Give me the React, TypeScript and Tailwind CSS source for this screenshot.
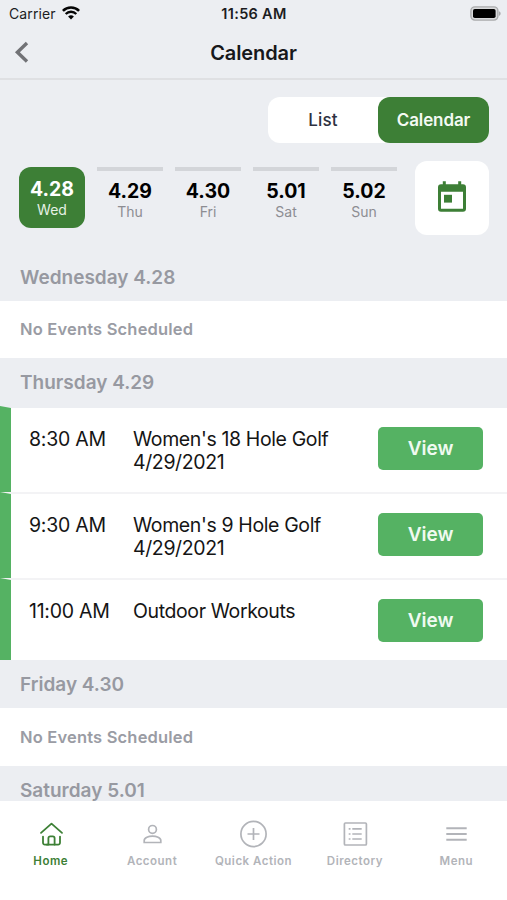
import { ReactNode } from "react";

const DAYS = [
  { date: "4.28", day: "Wed" },
  { date: "4.29", day: "Thu" },
  { date: "4.30", day: "Fri" },
  { date: "5.01", day: "Sat" },
  { date: "5.02", day: "Sun" },
];

const EVENTS = [
  { time: "8:30 AM", title: "Women's 18 Hole Golf", date: "4/29/2021" },
  { time: "9:30 AM", title: "Women's 9 Hole Golf", date: "4/29/2021" },
  { time: "11:00 AM", title: "Outdoor Workouts", date: "" },
];

function StatusBar() {
  return (
    <div className="h-7 grid grid-cols-3 items-center pl-[9px] pr-[6px] text-sm text-[#1c1d1f]">
      <div className="flex items-center gap-[6px]">
        <span className="text-[14px] tracking-[0.12px]">Carrier</span>
        <svg className="-mt-[2px]" width="18" height="14" viewBox="0 0 18 14" fill="none" stroke="#050505">
          <path d="M.9 4.9a11.4 11.4 0 0 1 16.2 0" strokeWidth="2.6" />
          <path d="M3.7 8a7.4 7.4 0 0 1 10.6 0" strokeWidth="2.3" />
          <path d="M9 13.6 6.1 10.6a4.2 4.2 0 0 1 5.8 0Z" fill="#050505" stroke="none" />
        </svg>
      </div>
      <span className="-ml-[2px] text-center text-[14.5px] font-semibold tracking-[0.3px] whitespace-nowrap">
        11:56 AM
      </span>
      <svg className="justify-self-end -mt-[2px]" width="31" height="15" viewBox="0 0 31 15">
        <rect x="0.9" y="0.9" width="27" height="13.2" rx="4" fill="#d9dadc" stroke="#a9aaac" strokeWidth="1.4" />
        <rect x="3" y="3" width="22.6" height="9" rx="1.8" fill="#000" />
        <path d="M29 5.2c2.2.8 2.2 3.8 0 4.6Z" fill="#a9aaac" />
      </svg>
    </div>
  );
}

function Header() {
  return (
    <header className="h-[52px] pb-px grid grid-cols-3 items-center border-b-2 border-[#dfe0e3]">
      <svg className="-mt-px ml-[14px]" width="16" height="24" viewBox="0 0 16 24" fill="none" stroke="#717276" strokeWidth="3.4">
        <path d="M13 3 3.4 12.2 13 21.4" />
      </svg>
      <h1 className="text-center text-[20px] font-semibold tracking-[-0.1px] text-[#17181a]">
        Calendar
      </h1>
    </header>
  );
}

function SectionTitle({ children, className }: { children: ReactNode; className: string }) {
  return (
    <h2 className={`pl-5 flex items-center text-[19px] font-semibold text-[#9799a1] ${className}`}>
      {children}
    </h2>
  );
}

function NoEvents({ className }: { className: string }) {
  return (
    <p className={`pl-5 flex items-center bg-white text-[16.5px] font-semibold tracking-[0.18px] text-[#9a9ca4] ${className}`}>
      No Events Scheduled
    </p>
  );
}

function Tab({ label, active, children }: { label: string; active?: boolean; children: ReactNode }) {
  return (
    <div className={`flex flex-col items-center ${active ? "text-[#3d8036]" : "text-[#b2b4b9]"}`}>
      <svg width="30" height="30" viewBox="0 0 30 30" fill="none" stroke="currentColor" strokeWidth="1.7">
        {children}
      </svg>
      <span className="mt-[5px] text-[11.5px] leading-[15px] font-semibold tracking-[0.5px] whitespace-nowrap">
        {label}
      </span>
    </div>
  );
}

export default function App() {
  return (
    <div className="w-[507px] h-[900px] overflow-hidden flex flex-col bg-[#eceef2] font-['Inter',sans-serif]">
      <StatusBar />
      <Header />

      {/* View toggle */}
      <div className="mt-[17px] mr-[18px] self-end flex shrink-0 w-[221px] h-[46px] rounded-xl bg-white text-[17px] font-semibold">
        <button className="w-[110px] pt-[2px] text-[#2d3140] font-medium tracking-[0.2px]">List</button>
        <button className="w-[111px] pt-[2px] rounded-xl bg-[#3d7f36] text-[#f4faf3] tracking-[-0.1px]">Calendar</button>
      </div>

      {/* Day picker */}
      <div className="mt-[18px] pl-[19px] pr-[18px] h-[74px] shrink-0 flex justify-between">
        <div className="mt-[6px] flex gap-[12px]">
          {DAYS.map((d, i) => (
            <div
              key={d.date}
              className={`w-[66px] h-[61px] flex flex-col items-center ${
                i === 0
                  ? "rounded-xl bg-[#3d7f36] text-white pt-[10px]"
                  : "border-t-4 border-[#d3d5d9] text-black pt-[8px]"
              }`}
            >
              <span className="pt-px text-[19.5px] leading-[23px] font-bold">{d.date}</span>
              <span className={`text-[14px] leading-[18px] ${i === 0 ? "text-[#e6f1e5]" : "text-[#8c8d92]"}`}>
                {d.day}
              </span>
            </div>
          ))}
        </div>
        <button className="w-[74px] h-[74px] rounded-xl bg-white flex items-center justify-center">
          <svg className="-mt-[3px]" width="28" height="31" viewBox="0 0 28 31" fill="#3d7f36">
            <path
              fillRule="evenodd"
              d="M4.8.3h3v3h12.4v-3h3v3H25a3 3 0 0 1 3 3v21.4a3 3 0 0 1-3 3H3a3 3 0 0 1-3-3V6.3a3 3 0 0 1 3-3h1.8ZM3 10.800v16.900h22V10.800Z"
            />
            <rect x="6" y="13.8" width="8" height="7.8" />
          </svg>
        </button>
      </div>

      {/* Agenda */}
      <div className="flex-1 min-h-0 overflow-hidden">
        <SectionTitle className="h-[66px] pt-[20px]">Wednesday 4.28</SectionTitle>
        <NoEvents className="h-[57px]" />
        <SectionTitle className="h-[48px] pt-[2px]">Thursday 4.29</SectionTitle>
        {EVENTS.map((e, i) => (
          <div
            key={e.time}
            className={`flex border-l-[11px] border-l-[#55b263] border-t-2 bg-white pl-[18px] pt-[19px] text-[19.5px] leading-[23px] text-[#151515] ${
              i === 0 ? "border-t-[#eceef2]" : "border-t-[#f3f3f5]"
            } ${i === 2 ? "h-[82px]" : "h-[86px]"}`}
          >
            <span className="w-[104px] pt-px shrink-0 tracking-[-0.25px] whitespace-nowrap">{e.time}</span>
            <div className="flex-1 pt-px tracking-[-0.38px] whitespace-nowrap">
              <p>{e.title}</p>
              <p>{e.date}</p>
            </div>
            <button className="mr-[24px] w-[105px] h-[43px] rounded-[5px] bg-[#55b263] text-[19px] font-semibold text-[#f0faf1]">
              View
            </button>
          </div>
        ))}
        <SectionTitle className="h-[48px] pt-[2px]">Friday 4.30</SectionTitle>
        <NoEvents className="h-[58px]" />
        <SectionTitle className="h-[48px] pt-[2px]">Saturday 5.01</SectionTitle>
      </div>

      {/* Tab bar */}
      <nav className="h-[99px] shrink-0 grid grid-cols-5 pt-[18px] bg-white">
        <Tab label="Home" active>
          <g strokeWidth="1.8" strokeLinecap="round" strokeLinejoin="round">
            <path d="M5 13.9 15.5 4.6 26 13.9" />
            <path d="M7 17.6v6.2a1.800 1.800 0 0 0 1.800 1.800h13.400a1.800 1.800 0 0 0 1.800-1.800v-6.200" />
            <path d="M10.800 25.600h1.600v-6.400a1.800 1.800 0 0 1 1.800-1.800h2.600a1.800 1.800 0 0 1 1.800 1.800v6.400" />
          </g>
        </Tab>
        <Tab label="Account">
          <circle cx="15.5" cy="10.4" r="3.9" />
          <path d="M7.2 23.5v-2c0-3 4.5-4.4 8.3-4.4s8.3 1.4 8.3 4.4v2Z" />
        </Tab>
        <Tab label="Quick Action">
          <circle cx="15.5" cy="15" r="12.6" />
          <path d="M15.5 9v12M9.5 15h12" />
        </Tab>
        <Tab label="Directory">
          <rect x="4.4" y="4" width="22" height="22" rx="1" />
          <path d="M12.3 9.8h9.4M12.3 15h9.4M12.3 20h9.4M8.7 9.8h1.8M8.7 15h1.8M8.7 20h1.8" />
        </Tab>
        <Tab label="Menu">
          <path d="M5.3 9.3h20.4M5.3 15h20.4M5.3 20.7h20.4" strokeWidth="2" />
        </Tab>
      </nav>
    </div>
  );
}
